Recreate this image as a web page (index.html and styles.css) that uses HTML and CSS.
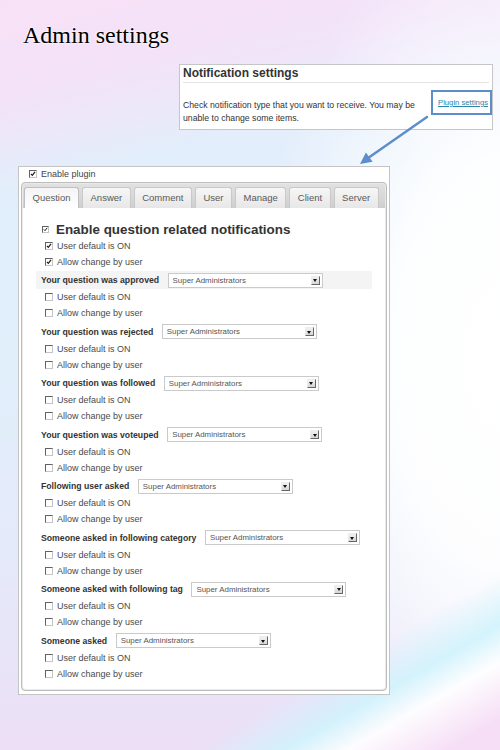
FILE: index.html
```html
<!DOCTYPE html>
<html lang="en">
<head>
<meta charset="utf-8">
<title>Admin settings</title>
<link rel="stylesheet" href="styles.css">
</head>
<body>
<div class="page">
  <h1 class="page-title">Admin settings</h1>

  <section class="notify-box">
    <h2 class="notify-title">Notification settings</h2>
    <div class="notify-body">
      <p class="notify-text">Check notification type that you want to receive. You may be unable to change some items.</p>
      <a class="plugin-link" href="#plugin">Plugin settings</a>
    </div>
  </section>

  <!-- callout from the link down to the plugin panel -->
  <svg class="callout-arrow" width="80" height="56" viewBox="0 0 80 56">
    <line x1="72" y1="5" x2="14.2" y2="45.3" stroke="#5b8ecb" stroke-width="2.4" stroke-linecap="round"/>
    <polygon points="5,52 17.6,49.8 10.9,40.4" fill="#5b8ecb"/>
  </svg>

  <section class="plugin-panel" id="plugin">
    <div class="enable-plugin">
      <span class="cb is-checked"><svg viewBox="0 0 8 8"><path d="M1.3 3.9 L3.1 5.9 L6.7 1.3"/></svg></span>
      Enable plugin
    </div>

    <div class="tabs">
      <ul class="tab-bar">
        <li class="tab is-active">Question</li>
        <li class="tab">Answer</li>
        <li class="tab">Comment</li>
        <li class="tab">User</li>
        <li class="tab">Manage</li>
        <li class="tab">Client</li>
        <li class="tab">Server</li>
      </ul>

      <div class="tab-content">
        <div class="group-title">
          <span class="cb cb-small is-checked"><svg viewBox="0 0 8 8"><path d="M1.3 3.9 L3.1 5.9 L6.7 1.3"/></svg></span>
          Enable question related notifications
        </div>
        <div class="opt"><span class="cb is-checked"><svg viewBox="0 0 8 8"><path d="M1.3 3.9 L3.1 5.9 L6.7 1.3"/></svg></span>User default is ON</div>
        <div class="opt"><span class="cb is-checked"><svg viewBox="0 0 8 8"><path d="M1.3 3.9 L3.1 5.9 L6.7 1.3"/></svg></span>Allow change by user</div>

        <div class="event is-hover">
          <span class="event-label">Your question was approved</span>
          <span class="select"><span>Super Administrators</span><i class="select-btn"></i></span>
        </div>
        <div class="opt"><span class="cb"></span>User default is ON</div>
        <div class="opt"><span class="cb"></span>Allow change by user</div>

        <div class="event">
          <span class="event-label">Your question was rejected</span>
          <span class="select"><span>Super Administrators</span><i class="select-btn"></i></span>
        </div>
        <div class="opt"><span class="cb"></span>User default is ON</div>
        <div class="opt"><span class="cb"></span>Allow change by user</div>

        <div class="event">
          <span class="event-label">Your question was followed</span>
          <span class="select"><span>Super Administrators</span><i class="select-btn"></i></span>
        </div>
        <div class="opt"><span class="cb"></span>User default is ON</div>
        <div class="opt"><span class="cb"></span>Allow change by user</div>

        <div class="event">
          <span class="event-label">Your question was voteuped</span>
          <span class="select"><span>Super Administrators</span><i class="select-btn"></i></span>
        </div>
        <div class="opt"><span class="cb"></span>User default is ON</div>
        <div class="opt"><span class="cb"></span>Allow change by user</div>

        <div class="event">
          <span class="event-label">Following user asked</span>
          <span class="select"><span>Super Administrators</span><i class="select-btn"></i></span>
        </div>
        <div class="opt"><span class="cb"></span>User default is ON</div>
        <div class="opt"><span class="cb"></span>Allow change by user</div>

        <div class="event">
          <span class="event-label">Someone asked in following category</span>
          <span class="select"><span>Super Administrators</span><i class="select-btn"></i></span>
        </div>
        <div class="opt"><span class="cb"></span>User default is ON</div>
        <div class="opt"><span class="cb"></span>Allow change by user</div>

        <div class="event">
          <span class="event-label">Someone asked with following tag</span>
          <span class="select"><span>Super Administrators</span><i class="select-btn"></i></span>
        </div>
        <div class="opt"><span class="cb"></span>User default is ON</div>
        <div class="opt"><span class="cb"></span>Allow change by user</div>

        <div class="event">
          <span class="event-label">Someone asked</span>
          <span class="select"><span>Super Administrators</span><i class="select-btn"></i></span>
        </div>
        <div class="opt"><span class="cb"></span>User default is ON</div>
        <div class="opt"><span class="cb"></span>Allow change by user</div>
      </div>
    </div>
  </section>
</div>
</body>
</html>
```

FILE: styles.css
```css
* {
  box-sizing: border-box;
}

html,
body {
  margin: 0;
  padding: 0;
}

body {
  font-family: "Liberation Sans", Arial, sans-serif;
  color: #444;
  background-color: #e6effb;
  background-image:
    /* cyan, white and pink streaks rising across the bottom right */
    linear-gradient(150deg, rgba(255, 255, 255, 0) 83%, rgba(208, 243, 252, 0.9) 88%, rgba(255, 255, 255, 0.9) 91.5%, rgba(246, 223, 246, 1) 97%),
    /* bright glow along the right edge */
    radial-gradient(ellipse 260px 460px at 510px 360px, #ffffff 0%, rgba(255, 255, 255, 0.92) 45%, rgba(255, 255, 255, 0) 100%),
    /* pink wedge across the top-left */
    linear-gradient(165deg, #f8e1f6 0%, #f3e2f8 11%, rgba(238, 232, 250, 0) 22%),
    linear-gradient(180deg, #eee6fa 0%, #e2eefb 20%, #e1effb 50%, #e5e9fa 75%, #ecdff6 100%);
}

.page {
  position: relative;
  width: 500px;
  height: 750px;
  padding-top: 21px;
  overflow: hidden;
}

.page-title {
  margin: 0 0 15px 23px;
  font: 400 24px/28px "Liberation Serif", "Times New Roman", serif;
  color: #000;
  text-shadow: 0 0 2px #fff, 0 0 3px #fff;
}

/* ---------- notification summary box ---------- */

.notify-box {
  margin-left: 179px;
  width: 314px;
  height: 66px;
  background: #fff;
  border: 1px solid #c6c6c6;
}

.notify-title {
  margin: 0 3px;
  padding: 1px 0;
  font: 700 12px/15px "Liberation Sans", Arial, sans-serif;
  color: #333;
  border-bottom: 1px solid #e4e4e4;
}

.notify-body {
  display: flex;
  align-items: flex-start;
  padding-left: 3px;
}

.notify-text {
  margin: 15.5px 0 0;
  width: 240px;
  font-size: 8.7px;
  line-height: 13px;
  color: #333;
}

.plugin-link {
  margin: 7px 0 0 auto;
  padding: 6px 2px 5px 5px;
  border: 2.5px solid #5b8ecb;
  font-size: 7.7px;
  line-height: 10px;
  color: #2b86a8;
  text-decoration: underline;
  white-space: nowrap;
}

.callout-arrow {
  position: absolute;
  left: 355px;
  top: 112px;
}

/* ---------- plugin panel ---------- */

.plugin-panel {
  margin: 36px 0 0 18px;
  width: 372px;
  background: #fff;
  border: 1px solid #c4c4c4;
}

.enable-plugin {
  display: flex;
  align-items: center;
  height: 14px;
  margin-bottom: 1px;
  padding-left: 10px;
  font-size: 9px;
  color: #444;
}

/* classic inset checkbox */
.cb {
  flex: none;
  display: inline-block;
  width: 8px;
  height: 8px;
  margin-right: 4px;
  background: #fff;
  border: 1px solid;
  border-color: #626262 #c4c4c4 #c4c4c4 #626262;
}

.cb svg {
  display: block;
  width: 100%;
  height: 100%;
}

.cb svg path {
  fill: none;
  stroke: #1a1a1a;
  stroke-width: 1.6;
}

.cb-small {
  width: 7px;
  height: 7px;
  margin-right: 7px;
}

/* ---------- tabs ---------- */

.tabs {
  margin: 0 2px 3px;
  padding: 1px;
  background: #e9e9e9;
  border: 1px solid #bdbdbd;
  border-radius: 4px;
}

.tab-bar {
  display: flex;
  align-items: flex-end;
  gap: 3px;
  height: 24px;
  margin: 0;
  padding: 0 1px;
  list-style: none;
  background: linear-gradient(#e1e1e1, #d0d0d0);
  border-radius: 3px 3px 0 0;
  border-bottom: 1px solid #cdcdcd;
}

.tab {
  height: 21px;
  margin-bottom: -1px;
  padding: 0 7.5px;
  font-size: 9.5px;
  line-height: 20px;
  color: #5a5a5a;
  background: linear-gradient(#f6f6f6, #e7e7e7);
  border: 1px solid #c9c9c9;
  border-bottom: 0;
  border-radius: 3px 3px 0 0;
}

.tab.is-active {
  background: linear-gradient(#f4f4f4, #ffffff);
  border-color: #bfbfbf;
}

.tab-content {
  padding: 12px 13px 7px;
  background: #fff;
  border-radius: 0 0 3px 3px;
}

.group-title {
  display: flex;
  align-items: center;
  height: 18px;
  padding-left: 6px;
  font-size: 13.4px;
  font-weight: 700;
  color: #333;
}

.opt {
  display: flex;
  align-items: center;
  height: 16px;
  padding-left: 9px;
  font-size: 9px;
  color: #4a4a4a;
}

.event {
  display: flex;
  align-items: center;
  gap: 8.5px;
  height: 18px;
  margin-top: 1.45px;
  padding-left: 5px;
}

.event.is-hover {
  background: #f4f4f4;
}

.event-label {
  font-size: 8.7px;
  font-weight: 700;
  color: #333;
  white-space: nowrap;
}

/* dropdown */
.select {
  display: flex;
  align-items: center;
  justify-content: space-between;
  width: 155px;
  height: 15px;
  padding: 0 2px 0 4px;
  background: #fff;
  border: 1px solid #cacaca;
  font-size: 7.9px;
  color: #555;
}

.select-btn {
  position: relative;
  width: 9px;
  height: 9px;
  background: linear-gradient(#f2f2f2, #d6d6d6);
  border: 1px solid;
  border-color: #ececec #666 #666 #ececec;
}

.select-btn::after {
  content: "";
  position: absolute;
  left: 1.5px;
  top: 2.5px;
  border-left: 2.5px solid transparent;
  border-right: 2.5px solid transparent;
  border-top: 3px solid #111;
}
```
